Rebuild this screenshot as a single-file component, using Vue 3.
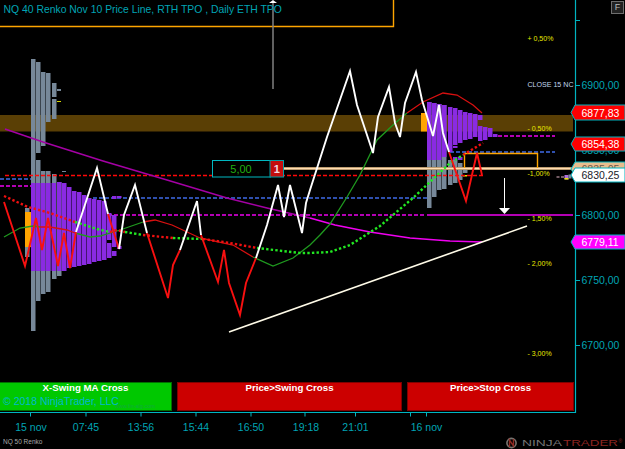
<script setup>
// price axis: 50 points every 65px
const priceLabels = [
  { text: '6900,00', y: 85 },
  { text: '6850,00', y: 150 },
  { text: '6800,00', y: 215 },
  { text: '6750,00', y: 280 },
  { text: '6700,00', y: 345 },
];
const priceTicks = [20, 85, 150, 215, 280, 345];

const timeLabels = [
  { text: '15 nov', x: 31 },
  { text: '07:45', x: 86 },
  { text: '13:56', x: 141 },
  { text: '15:44', x: 196 },
  { text: '16:50', x: 251 },
  { text: '19:18', x: 306 },
  { text: '21:01', x: 355.5 },
  { text: '16 nov', x: 426.5 },
];
const timeTicks = [30.5, 86, 141, 196, 251, 305, 355.5, 410.5, 426.5];

const percents = [
  { text: '+ 0,50%', y: 41 },
  { text: '- 0,50%', y: 131 },
  { text: '-1,00%', y: 176 },
  { text: '- 1,50%', y: 221 },
  { text: '- 2,00%', y: 266 },
  { text: '- 3,00%', y: 356 },
];

const flags = [
  { text: '6877,83', top: 105, bottom: 120, fill: '#ff0000', ink: '#ffffff' },
  { text: '6854,38', top: 137, bottom: 151, fill: '#ff0000', ink: '#ffffff' },
  { text: '6835,05', top: 162, bottom: 176, fill: '#e8bd8e', ink: '#6b5a48' },
  { text: '6830,25', top: 168, bottom: 182, fill: '#ffffff', ink: '#1a1a2a' },
  { text: '6779,11', top: 235, bottom: 249, fill: '#ff00ff', ink: '#ffffff' },
];
function flagPoints(f) {
  const mid = (f.top + f.bottom) / 2;
  return `571,${mid} 575,${f.top} 625,${f.top} 625,${f.bottom} 575,${f.bottom}`;
}

// volume profiles, [x, y1, y2]
const grey = [
  [31, 59, 331], [36, 62, 153], [36, 160, 301], [41, 72, 146], [41, 171, 294],
  [46, 73, 122], [46, 171, 292], [52, 83, 97], [52, 99, 119], [52, 174, 279],
  [57, 182, 276], [25, 208, 257],
  [427, 102, 208], [432, 103, 197], [437, 104, 190], [442, 105, 189],
  [448, 160, 185], [453, 160, 183], [458, 163, 180], [463, 168, 173],
];
const greyTicks = [[57, 89, 4, 2], [62, 171, 4, 1]];
const purple = [
  [31, 183, 271], [36, 183, 271], [41, 183, 271], [46, 183, 271], [51.5, 183, 271],
  [57, 182, 271], [62, 183, 271], [67, 187, 268], [72, 191, 267], [77, 192, 266],
  [82, 195, 265], [87, 198, 264], [92, 199, 262], [97, 200, 261], [102, 201, 260],
  [107, 213, 240], [107, 243, 258], [112, 215, 247], [112, 251, 256], [117, 246, 249],
  [112, 196, 199], [117, 196, 198],
  [427, 102, 160], [432, 103, 160], [437, 104, 160], [442, 105, 157], [448, 107, 152],
  [453, 108, 145], [458, 110, 143], [463, 112, 140], [468, 113, 139], [473, 114, 137],
  [478, 115, 120], [478, 126, 141], [483, 127, 140], [488, 128, 137], [493, 134, 137],
  [453, 157, 160], [458, 157, 160], [453, 146, 148],
];

const priceWhite = [
  '76,232 97,168 108,214',
  '119,249 124,215 135,185 147,233',
  '180,250 197,201 201,235',
  '256,258 267,225 278,185 284,217 290,185 302,233 306,203 310,190 327,137 350,71 357,105 373,153 378,117 389,87 395,123 400,137 405,103 416,72 422,100 433,136 439,105 443,133 449,152',
];
const priceRed = [
  '4,202 25,266 36,218 42,250 48,218 58,266 64,233 70,268 76,232',
  '108,214 119,249',
  '147,233 168,298 173,265 180,250',
  '201,235 218,282 224,250 229,283 240,315 246,283 256,258',
  '449,152 466,201 477,153 482,175',
];

const dotsRed = [
  '4,196 28,207 50,213 75,222',
  '110,232 117,230 125,232',
  '143,235 173,238',
  '203,239 230,243 257,248',
  '463,155 483,143',
];
const dotsGreen = [
  '75,222 97,229 110,232',
  '125,232 143,235',
  '173,238 203,239',
  '257,248 300,253 310,253 330,252 350,245 380,226 413,198 450,163 463,155',
];

const maGreen = [
  '4,237 20,228 33,226 40,227',
  '75,233 90,237 100,236 120,230 143,222',
  '253,257 273,266 293,258 310,245 320,235 330,224 347,197 360,175 377,140 393,125 407,113',
];
const maRed = [
  '40,227 50,227 67,230 75,233',
  '143,222 155,220 172,225 200,238 233,245 253,257',
  '407,113 423,102 443,93 457,95 473,105 482,113',
];
</script>

<template>
  <div class="screen">
    <svg class="chart" width="625" height="449" viewBox="0 0 625 449">
      <rect x="0" y="115" width="573" height="16.5" fill="#5a3f05" />

      <!-- order box -->
      <polyline points="0,26.5 393.5,26.5 393.5,0" fill="none" stroke="#ffa500" stroke-width="1.4" />
      <path d="M273 3V89" stroke="#808080" stroke-width="1.5" />
      <path d="M269 3L273 0L277 3Z" fill="#ffffff" />

      <!-- level lines -->
      <path d="M0 179H31M93 198H427M450 152H555" class="dash" stroke="#3f6be8" />
      <path d="M0 186H31M108 215H425M498 136H555" class="dash" stroke="#f000f0" />
      <path d="M427 215H573" stroke="#f000f0" stroke-width="1.7" />

      <rect v-for="(r, i) in grey" :key="'g' + i" :x="r[0]" :y="r[1]" width="4.5" :height="r[2] - r[1]" fill="#778899" />
      <rect v-for="(r, i) in greyTicks" :key="'t' + i" :x="r[0]" :y="r[1]" :width="r[2]" :height="r[3]" fill="#778899" />
      <rect x="25" y="212" width="6" height="35" fill="#ffa500" />
      <rect x="421" y="113" width="6" height="18.5" fill="#ffa500" />
      <rect x="57" y="101" width="4" height="1" fill="#d8d800" />
      <rect v-for="(r, i) in purple" :key="'p' + i" :x="r[0]" :y="r[1]" width="4.5" :height="r[2] - r[1]" fill="#8a2be2" />
      <rect x="463" y="175" width="4" height="1.5" fill="#e8e800" />

      <path d="M5 175.5H483" class="dash" stroke="#ff0808" />

      <!-- horizontal line with the quantity box -->
      <path d="M283 168.5H573" stroke="#a88a5c" stroke-width="3" />
      <path d="M283 168.5H573" stroke="#ffdcb0" stroke-width="1.6" />
      <polyline points="464.5,168 464.5,153.5 537.5,153.5 537.5,168" fill="none" stroke="#ffa500" stroke-width="1.4" />

      <polyline points="5,129 43,142 103,161 167,180 227,198 267,208 310,218" class="line" stroke="#a400a4" stroke-width="1.5" />
      <polyline points="310,218 335,225 370,232 410,238 450,241 482,242" class="line" stroke="#f000f0" stroke-width="1.6" />

      <polyline v-for="(p, i) in maGreen" :key="'mg' + i" :points="p" class="line ma" stroke="#1f9a1f" />
      <polyline v-for="(p, i) in maRed" :key="'mr' + i" :points="p" class="line ma" stroke="#d81010" />
      <polyline v-for="(p, i) in dotsRed" :key="'dr' + i" :points="p" class="dots" stroke="#f01010" />
      <polyline v-for="(p, i) in dotsGreen" :key="'dg' + i" :points="p" class="dots" stroke="#22e822" />

      <polyline v-for="(p, i) in priceRed" :key="'r' + i" :points="p" class="line" stroke="#f81010" stroke-width="1.9" />
      <polyline v-for="(p, i) in priceWhite" :key="'w' + i" :points="p" class="line" stroke="#ffffff" stroke-width="1.9" />

      <path d="M229 332L527 226" stroke="#fffbe8" stroke-width="1.6" />
      <path d="M504.5 178V208" stroke="#ffffff" />
      <path d="M499 208H510L504.5 214Z" fill="#ffffff" />

      <!-- quantity box -->
      <rect x="212.5" y="160.5" width="58" height="16.5" fill="#000000" stroke="#00b8c0" />
      <rect x="270" y="160.5" width="13.5" height="16.5" fill="#c40d0d" stroke="#00a0a8" />
      <text x="241" y="173" class="qty">5,00</text>
      <text x="276.7" y="173" class="qty-count">1</text>

      <!-- last-price crumbs -->
      <rect x="556.5" y="176.5" width="3" height="1" fill="#e8b8c8" />
      <rect x="561" y="176.5" width="3" height="1" fill="#e8b8c8" />
      <rect x="564.5" y="175" width="4" height="4.5" fill="#b070d8" />
      <rect x="564.5" y="178" width="4" height="1.5" fill="#e8e800" />
      <rect x="568.5" y="174.5" width="3" height="4" fill="#778899" />

      <text v-for="p in percents" :key="p.text" x="527.5" :y="p.y" class="pct">{{ p.text }}</text>
      <text x="527.5" y="86.5" class="close" textLength="46" lengthAdjust="spacingAndGlyphs">CLOSE 15 NC</text>

      <!-- axes -->
      <path d="M575.5 0V412.5H0" fill="none" stroke="#00b4c0" stroke-width="1.2" />
      <path v-for="y in priceTicks" :key="y" :d="`M576 ${y + 0.5}H580`" stroke="#00b4c0" />
      <path v-for="x in timeTicks" :key="x" :d="`M${x} 413V416.5`" stroke="#00b4c0" />
      <text v-for="l in priceLabels" :key="l.text" x="581.5" :y="l.y + 4" class="axis">{{ l.text }}</text>
      <text v-for="l in timeLabels" :key="l.text" :x="l.x" y="431" class="axis mid">{{ l.text }}</text>

      <g v-for="f in flags" :key="f.text">
        <polygon :points="flagPoints(f)" :fill="f.fill" stroke="#00b4c0" />
        <text x="581.5" :y="f.bottom - 3.5" class="flag" :fill="f.ink">{{ f.text }}</text>
      </g>
    </svg>

    <div class="title">NQ 40 Renko Nov 10 Price Line, RTH TPO , Daily ETH TPO</div>
    <div class="f-btn">F</div>

    <div class="signals">
      <div class="signal green">
        <span>X-Swing MA Cross</span>
        <span class="copyright">© 2018 NinjaTrader, LLC</span>
        <span class="site">www.fin-alg.com</span>
      </div>
      <div class="signal red"><span>Price&gt;Swing Cross</span></div>
      <div class="signal red stop"><span>Price&gt;Stop Cross</span></div>
    </div>

    <div class="footer">
      <span class="instrument">NQ 50 Renko</span>
      <svg class="logo" width="119" height="12" viewBox="0 0 119 12">
        <circle cx="6.5" cy="6" r="4.6" fill="none" stroke="#77736f" stroke-width="1.6" />
        <path d="M4.5 10V3L8.5 9V2" fill="none" stroke="#8f2a22" stroke-width="1.4" />
        <text x="17" y="9" class="ninja" textLength="40" lengthAdjust="spacingAndGlyphs">NINJA</text>
        <text x="58" y="9" class="trader" textLength="55" lengthAdjust="spacingAndGlyphs">TRADER</text>
        <text x="113.5" y="6" class="reg">®</text>
      </svg>
    </div>
  </div>
</template>

<style scoped>
.screen {
  position: relative;
  width: 625px;
  height: 449px;
  background: #000;
  overflow: hidden;
  display: flex;
  flex-direction: column;
  font-family: "Liberation Sans", Arial, sans-serif;
}

.chart {
  position: absolute;
  left: 0;
  top: 0;
}

.dash {
  fill: none;
  stroke-width: 1.7;
  stroke-dasharray: 4 2;
}

.line {
  fill: none;
  stroke-linejoin: miter;
}

.ma {
  stroke-width: 1.3;
}

.dots {
  fill: none;
  stroke-width: 2.4;
  stroke-dasharray: 2.4 2.2;
}

.axis {
  fill: #00a5b5;
  font-size: 10.5px;
}

.mid {
  text-anchor: middle;
}

.flag {
  font-size: 10.5px;
}

.pct {
  fill: #e8e800;
  font-size: 7px;
}

.close {
  fill: #c2d6ee;
  font-size: 7.5px;
}

.qty {
  fill: #22b010;
  font-size: 11px;
  text-anchor: middle;
}

.qty-count {
  fill: #f4d8e0;
  font-size: 11px;
  font-weight: 700;
  text-anchor: middle;
}

.title {
  position: relative;
  padding: 3px 0 0 3.5px;
  height: 14px;
  line-height: 14px;
  font-size: 10.4px;
  color: #00a5b5;
  white-space: nowrap;
}

.f-btn {
  position: absolute;
  top: 1px;
  right: 1px;
  width: 11px;
  height: 11px;
  border: 1px solid #6e6e6e;
  background: #222;
  color: #bbb;
  font-size: 9px;
  line-height: 11px;
  text-align: center;
}

.signals {
  position: relative;
  display: flex;
  gap: 5px;
  width: 574px;
  height: 29px;
  margin-top: 364.5px;
}

.signal {
  position: relative;
  box-sizing: border-box;
  border: 1px solid #800000;
  background: #cc0000;
  color: #fff;
  font-size: 9.7px;
  font-weight: 700;
  line-height: 10px;
  text-align: center;
}

.signal.green {
  width: 173px;
  margin-left: -1px;
  border-color: #006f00;
  background: #00c800;
}

.signal.red {
  width: 225px;
}

.signal.stop {
  width: 167px;
}

.copyright {
  position: absolute;
  left: 3px;
  top: 13px;
  color: #00b8d0;
  font-size: 10.5px;
  font-weight: 400;
  white-space: nowrap;
}

.site {
  position: absolute;
  left: 115px;
  top: 18px;
  color: #10a840;
  font-size: 5.5px;
  font-weight: 400;
  white-space: nowrap;
}

.footer {
  position: relative;
  display: flex;
  justify-content: space-between;
  height: 12px;
  margin-top: 26.5px;
  padding: 0 1px 0 3px;
}

.instrument {
  color: #a8a8a8;
  font-size: 6.5px;
  line-height: 10px;
}

.ninja {
  fill: #747474;
  font-size: 9px;
}

.trader {
  fill: #8a2420;
  font-size: 9px;
}

.reg {
  fill: #8a2420;
  font-size: 5px;
}
</style>
